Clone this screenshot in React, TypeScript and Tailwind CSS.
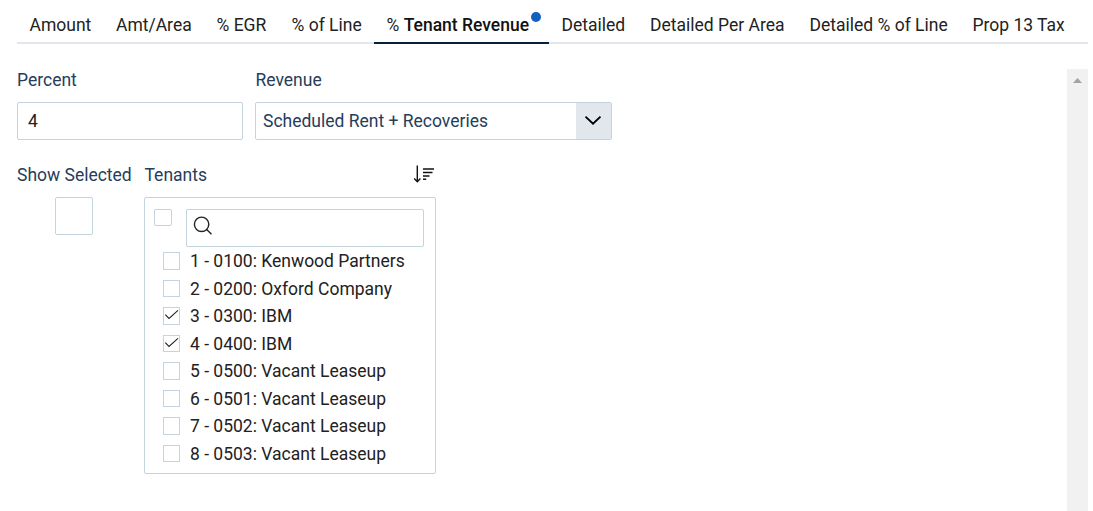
import React from "react";

const TABS = [
  { label: "Amount", width: "w-[86.5px]" },
  { label: "Amt/Area", width: "w-[100.5px]" },
  { label: "% EGR", width: "w-[75px]" },
  { label: "% of Line", width: "w-[95px]" },
  { label: "Tenant Revenue", width: "w-[175px]", active: true },
  { label: "Detailed", width: "w-[88.5px]" },
  { label: "Detailed Per Area", width: "w-[159.5px]" },
  { label: "Detailed % of Line", width: "w-[163px]" },
  { label: "Prop 13 Tax", width: "w-[128px]" },
];

const TENANTS = [
  { label: "1 - 0100: Kenwood Partners", checked: false },
  { label: "2 - 0200: Oxford Company", checked: false },
  { label: "3 - 0300: IBM", checked: true },
  { label: "4 - 0400: IBM", checked: true },
  { label: "5 - 0500: Vacant Leaseup", checked: false },
  { label: "6 - 0501: Vacant Leaseup", checked: false },
  { label: "7 - 0502: Vacant Leaseup", checked: false },
  { label: "8 - 0503: Vacant Leaseup", checked: false },
];

function Tabs() {
  return (
    <nav className="flex h-11 w-[1071px] shrink-0">
      {TABS.map((tab) => (
        <div
          key={tab.label}
          className={`flex h-11 shrink-0 border-b-2 pt-3 pl-[12.5px] leading-[27px] whitespace-nowrap ${tab.width} ${
            tab.active ? "border-[#04203f]" : "border-[#e2e6ed]"
          }`}
        >
          {tab.active ? (
            <>
              <span>%&nbsp;</span>
              <span className="font-medium text-[#111]">{tab.label}</span>
              <span className="ml-0.5 size-2.5 rounded-full bg-[#1060c0]" />
            </>
          ) : (
            tab.label
          )}
        </div>
      ))}
    </nav>
  );
}

function Checkbox({ checked = false }: { checked?: boolean }) {
  return (
    <span className="flex h-[17.5px] w-[17px] shrink-0 items-start justify-center border border-[#c4d4dc] bg-white">
      {checked && (
        <svg viewBox="0 0 15 15" className="size-[15px]" fill="none" stroke="#222" strokeWidth="1.1">
          <path d="M1.3 6.6 5 10.4 14 2.4" />
        </svg>
      )}
    </span>
  );
}

export default function App() {
  return (
    <main className="flex h-[511px] w-[1093px] flex-col overflow-hidden bg-white pl-[17px] font-['Roboto',sans-serif] text-[17.5px] text-[#222]">
      <Tabs />
      <div className="flex min-h-0 flex-1">
        <section className="flex w-[1050px] flex-col pt-[23px]">
          <div className="flex gap-3 text-[#263d5b]">
            <label className="flex w-[226px] flex-col">
              <span className="h-[35px] leading-[27px]">Percent</span>
              <span className="flex h-[38px] items-center rounded-xs border border-[#c4d4dc] pl-2.5 text-[#222]">4</span>
            </label>
            <label className="flex w-[357px] flex-col">
              <span className="h-[35px] pl-[0.5px] leading-[27px]">Revenue</span>
              <span className="flex h-[38px] overflow-hidden rounded-xs border border-[#c4d4dc]">
                <span className="flex flex-1 items-center pl-[7px]">Scheduled Rent + Recoveries</span>
                <span className="flex w-[35px] items-center justify-center bg-[#e2e7ee]">
                  <svg viewBox="0 0 18 12" className="mr-px h-3 w-[18px]" fill="none" stroke="#000" strokeWidth="1.9">
                    <path d="M1.5 1.6 9 8.8 16.5 1.6" />
                  </svg>
                </span>
              </span>
            </label>
          </div>

          <div className="mt-[22px] flex">
            <div className="flex w-[127px] flex-col text-[#263d5b]">
              <span className="h-[35px] leading-[27px] whitespace-nowrap">Show Selected</span>
              <span className="ml-[38px] size-[38px] rounded-xs border border-[#c4d4dc]" />
            </div>
            <div className="flex w-[292px] flex-col">
              <div className="flex h-[35px] justify-between">
                <span className="pl-[0.5px] leading-[27px] text-[#263d5b]">Tenants</span>
                <svg viewBox="0 0 21 18" className="mt-[3px] mr-0.5 h-[18px] w-[21px]" fill="none" stroke="#111" strokeWidth="1.6">
                  <path d="M4.3 .5v16M1.2 13.6 4.3 16.7 7.4 13.6" strokeWidth="1.4" />
                  <path d="M10 4h11M10 7.5h9.5M10 11h6.5M10 14.3h3.2" />
                </svg>
              </div>
              <div className="flex h-[277px] flex-col rounded-xs border border-[#c4d4dc] pt-[11px]">
                <div className="flex h-[38px] shrink-0 gap-[14px] pl-[9px]">
                  <span className="h-[17px] w-[18px] rounded-xs border border-[#c4d4dc]" />
                  <span className="flex h-[38px] w-[238px] rounded-xs border border-[#c4d4dc] pt-[6px] pl-[6px]">
                    <svg viewBox="0 0 20 20" className="size-5" fill="none" stroke="#222" strokeWidth="1.4">
                      <circle cx="8.6" cy="8.3" r="7.2" />
                      <path d="m13.7 13.5 4.8 4.8" />
                    </svg>
                  </span>
                </div>
                <ul className="flex flex-col">
                  {TENANTS.map((tenant) => (
                    <li key={tenant.label} className="flex h-[27.5px] items-center gap-[10px] pl-[18px] whitespace-nowrap">
                      <Checkbox checked={tenant.checked} />
                      <span className="pt-0.5 leading-[25.5px]">{tenant.label}</span>
                    </li>
                  ))}
                </ul>
              </div>
            </div>
          </div>
        </section>
        <aside className="mt-[25px] flex w-[21px] justify-center bg-[#f1f1f1] pt-[9px]">
          <svg viewBox="0 0 9 5" className="h-[5px] w-[9px]" fill="#a3a3a3">
            <path d="M0 5 4.5 0 9 5Z" />
          </svg>
        </aside>
      </div>
    </main>
  );
}
